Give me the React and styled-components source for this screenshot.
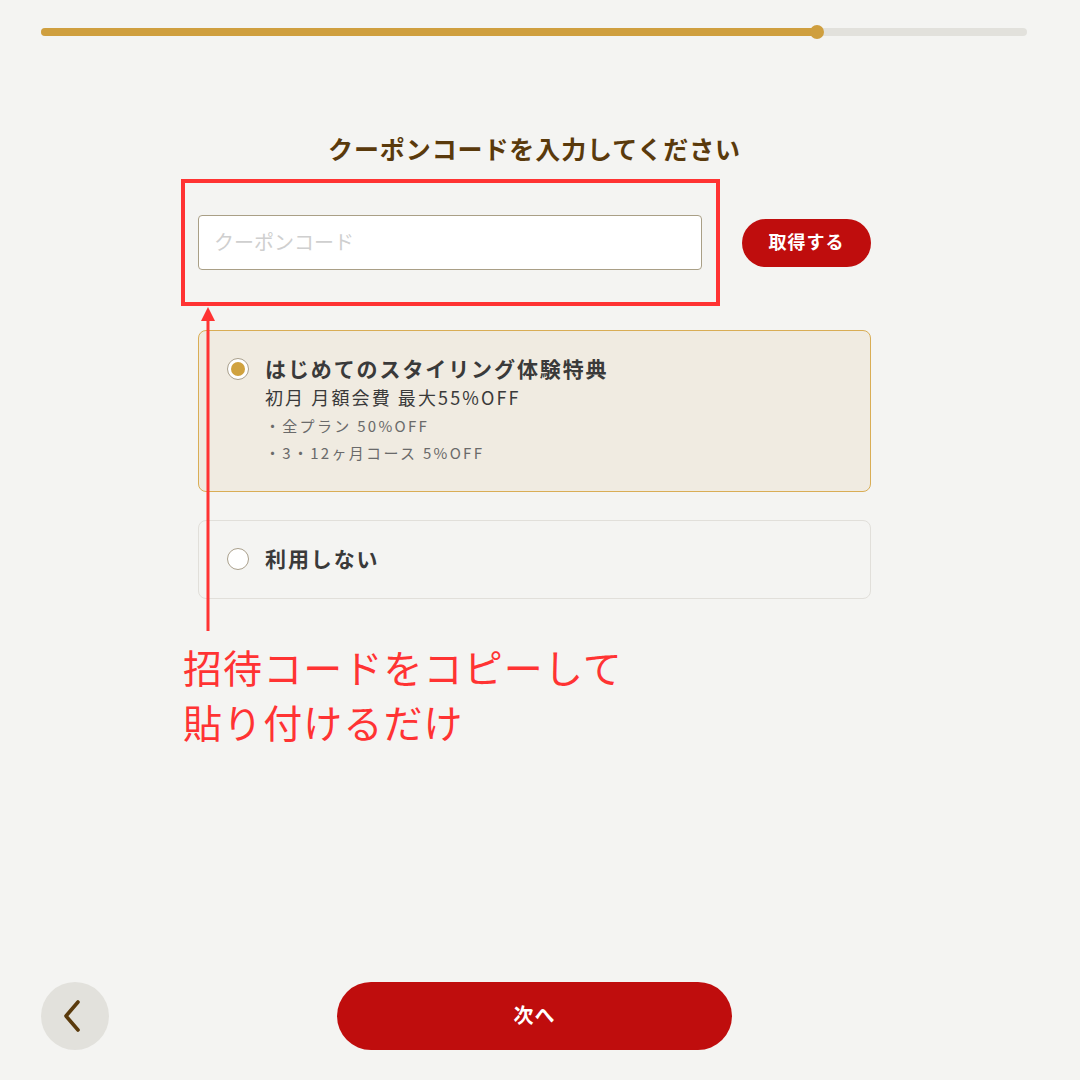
import React from "react";
import styled, { createGlobalStyle } from "styled-components";

const Global = createGlobalStyle`
  html, body { margin: 0; padding: 0; background: #f4f4f2; }
  body { font-family: "Noto Sans CJK JP", "Noto Sans", sans-serif; }
  * { box-sizing: border-box; }
`;

const Page = styled.div`
  width: 1080px;
  height: 1080px;
  display: flex;
  flex-direction: column;
  background: #f4f4f2;
  overflow: hidden;
`;

const Header = styled.div`
  height: 64px;
  padding: 0 53px 0 41px;
  display: flex;
  align-items: center;
`;

const Track = styled.div`
  position: relative;
  flex: 1;
  height: 8px;
  border-radius: 4px;
  background: #e2e1dc;
`;

const Fill = styled.div`
  height: 100%;
  border-radius: 4px;
  background: #cf9f3f;
`;

const Knob = styled.div`
  position: absolute;
  top: 50%;
  width: 14px;
  height: 14px;
  border-radius: 50%;
  background: #cf9f3f;
  transform: translate(-50%, -50%);
`;

const Main = styled.main`
  position: relative;
  width: 673px;
  margin-left: 198px;
  padding-top: 71px;
  display: flex;
  flex-direction: column;
`;

const Title = styled.h1`
  margin: 0;
  font-size: 25px;
  line-height: 26px;
  font-weight: 700;
  color: #5a3a0c;
  text-align: center;
  letter-spacing: 0.9px;
`;

const InputRow = styled.div`
  position: relative;
  margin-top: 54px;
  display: flex;
  align-items: center;
  gap: 40px;
`;

const CodeInput = styled.input`
  width: 504px;
  height: 55px;
  padding: 0 15px 3px;
  border: 1px solid #a99f86;
  border-radius: 4px;
  background: #fff;
  font-family: inherit;
  font-size: 20px;
  color: #333;
  outline: none;
  &::placeholder { color: #cfcfcf; }
`;

const PillButton = styled.button`
  border: none;
  background: #bf0d0d;
  color: #fff;
  font-family: inherit;
  font-weight: 700;
  cursor: pointer;
  width: ${(p) => p.$w}px;
  height: ${(p) => p.$h}px;
  border-radius: ${(p) => p.$h / 2}px;
  font-size: ${(p) => p.$fs}px;
  letter-spacing: 1px;
  padding: 0 0 4px;
`;

const Card = styled.label`
  display: flex;
  align-items: flex-start;
  gap: 16px;
  margin-top: ${(p) => p.$mt}px;
  padding: ${(p) => (p.$selected ? "23px 28px 25px" : "23px 28px 26px")};
  border-radius: 8px;
  border: 1px solid ${(p) => (p.$selected ? "#d9ad55" : "#e1dfda")};
  background: ${(p) => (p.$selected ? "#f0ebe1" : "#f4f4f2")};
`;

const Radio = styled.span`
  flex: none;
  margin-top: 4px;
  width: 22px;
  height: 22px;
  border-radius: 50%;
  border: 1.5px solid #aaa08c;
  background: #fff;
  display: flex;
  align-items: center;
  justify-content: center;
  &::after {
    content: "";
    width: 14px;
    height: 14px;
    border-radius: 50%;
    background: ${(p) => (p.$checked ? "#d0a23f" : "transparent")};
  }
`;

const CardBody = styled.div`
  display: flex;
  flex-direction: column;
`;

const CardTitle = styled.div`
  font-size: 21px;
  line-height: 28px;
  font-weight: 700;
  color: #3a3a3a;
  letter-spacing: 1.9px;
`;

const CardLine = styled.div`
  font-size: 18px;
  line-height: 30px;
  color: #3a3a3a;
  letter-spacing: 2.1px;
`;

const Bullet = styled.div`
  font-size: 15px;
  line-height: 27px;
  color: #6a6a6a;
  letter-spacing: 2.3px;
`;

const AnnoBox = styled.div`
  position: absolute;
  left: -17px;
  top: -36px;
  width: 539px;
  height: 127px;
  border: 4px solid #ff3333;
  pointer-events: none;
`;

const AnnoArrow = styled.svg`
  position: absolute;
  left: 1px;
  top: 91px;
`;

const AnnoText = styled.div`
  position: absolute;
  left: -15px;
  top: 424px;
  font-size: 39px;
  line-height: 55px;
  color: #ff3333;
  white-space: nowrap;
  letter-spacing: 1.1px;
`;

const Footer = styled.footer`
  margin-top: auto;
  padding: 0 0 30px 41px;
  display: flex;
  align-items: center;
  gap: 228px;
`;

const BackButton = styled.button`
  width: 68px;
  height: 68px;
  border-radius: 50%;
  border: none;
  background: #e2e1dc;
  display: flex;
  align-items: center;
  justify-content: center;
  padding: 0;
  cursor: pointer;
`;

export default function App() {
  const progress = 776 / 986;
  return (
    <Page>
      <Global />
      <Header>
        <Track>
          <Fill style={{ width: `${progress * 100}%` }} />
          <Knob style={{ left: `${progress * 100}%` }} />
        </Track>
      </Header>
      <Main>
        <Title>クーポンコードを入力してください</Title>
        <InputRow>
          <CodeInput placeholder="クーポンコード" />
          <PillButton $w={129} $h={48} $fs={18}>取得する</PillButton>
          <AnnoBox />
          <AnnoArrow width="18" height="325" viewBox="0 0 18 325">
            <polygon points="9,1 16,15 2,15" fill="#ff3333" />
            <rect x="7.5" y="10" width="3" height="315" fill="#ff3333" />
          </AnnoArrow>
          <AnnoText>
            招待コードをコピーして
            <br />
            貼り付けるだけ
          </AnnoText>
        </InputRow>
        <Card $selected $mt={60}>
          <Radio $checked />
          <CardBody>
            <CardTitle>はじめてのスタイリング体験特典</CardTitle>
            <CardLine>初月 月額会費 最大55%OFF</CardLine>
            <Bullet>・全プラン 50%OFF</Bullet>
            <Bullet>・3・12ヶ月コース 5%OFF</Bullet>
          </CardBody>
        </Card>
        <Card $mt={28}>
          <Radio />
          <CardBody>
            <CardTitle>利用しない</CardTitle>
          </CardBody>
        </Card>
      </Main>
      <Footer>
        <BackButton aria-label="戻る">
          <svg width="24" height="34" viewBox="0 0 24 34">
            <polyline
              points="15,3 3,17 15,31"
              fill="none"
              stroke="#5a3a0c"
              strokeWidth="3.6"
              strokeLinecap="round"
              strokeLinejoin="round"
            />
          </svg>
        </BackButton>
        <PillButton $w={395} $h={68} $fs={20}>次へ</PillButton>
      </Footer>
    </Page>
  );
}
